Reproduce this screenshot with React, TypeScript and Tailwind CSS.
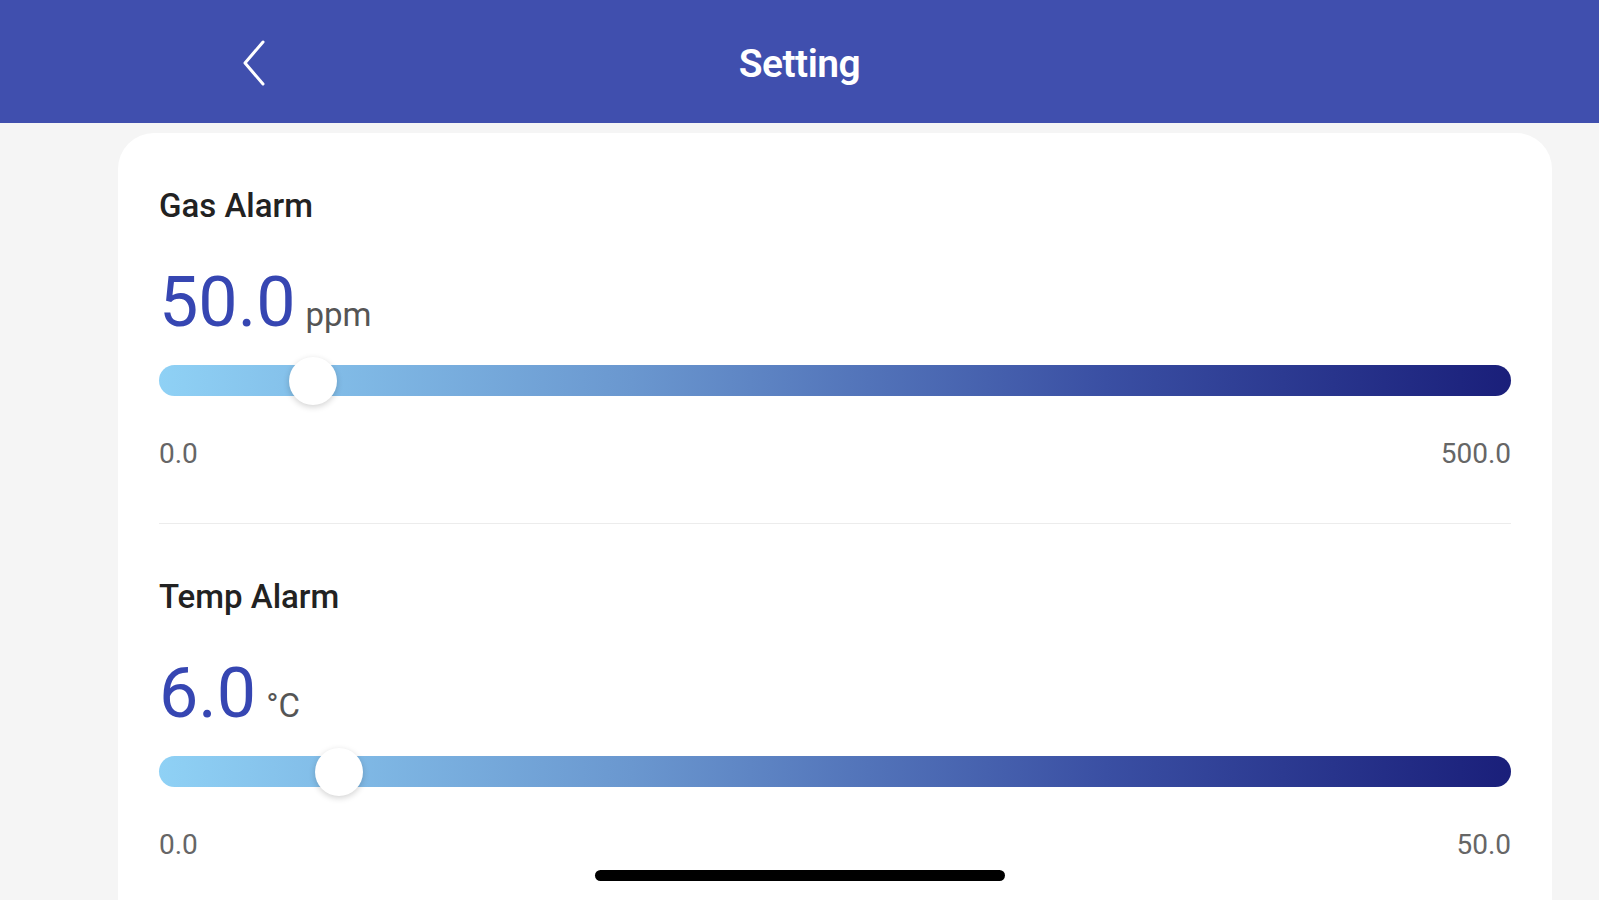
type AlarmProps = {
  title: string
  value: number
  unit: string
  min: number
  max: number
}

const TRACK_W = 1352
const THUMB = 48

const BackIcon = () => (
  <svg width="26" height="48" viewBox="0 0 26 48" fill="none">
    <polyline
      points="22,3 4,24 22,45"
      stroke="white"
      strokeWidth="3"
      strokeLinecap="round"
      strokeLinejoin="round"
    />
  </svg>
)

const AlarmSlider = ({ title, value, unit, min, max }: AlarmProps) => {
  const pct = (value - min) / (max - min)

  return (
    <div className="flex flex-col">
      <div className="text-[33px] leading-[40px] font-medium text-[#222222]">{title}</div>

      <div className="mt-[41px] flex items-baseline">
        <span className="text-[70px] leading-none font-normal text-[#3646b2]">{value.toFixed(1)}</span>
        <span className="ml-[10px] text-[33px] leading-none text-[#555555]">{unit}</span>
      </div>

      <div className="relative mt-[28px] h-[31px] rounded-full bg-[linear-gradient(90deg,#8fd1f5_0%,#6a97cf_35%,#3a4fa3_70%,#1a1f7a_100%)]">
        <div
          className="absolute top-1/2 -translate-y-1/2 h-[48px] w-[48px] rounded-full bg-white shadow-[0_2px_6px_rgba(0,0,0,0.18)]"
          style={{ left: pct * (TRACK_W - THUMB) }}
        />
      </div>

      <div className="mt-[41px] flex justify-between text-[28px] leading-[34px] text-[#666666]">
        <span>{min.toFixed(1)}</span>
        <span>{max.toFixed(1)}</span>
      </div>
    </div>
  )
}

export default function App() {
  return (
    <div
      className="relative h-[900px] w-full overflow-hidden bg-[#f5f5f5] flex flex-col"
      style={{ fontFamily: "Roboto, 'Liberation Sans', sans-serif" }}
    >
      <header className="h-[123px] shrink-0 bg-[#404fae] grid grid-cols-[1fr_auto_1fr] items-center">
        <div className="pl-[241px] pt-[2px] flex">
          <BackIcon />
        </div>
        <h1 className="pt-[5px] text-[39px] font-semibold text-white tracking-[-0.5px]">Setting</h1>
        <div />
      </header>

      <main className="flex-1 ml-[118px] mr-[47px] mt-[10px] rounded-t-[36px] bg-white px-[41px] pt-[53px]">
        <AlarmSlider title="Gas Alarm" value={50} unit="ppm" min={0} max={500} />
        <div className="mt-[52px] h-px bg-[#ececec]" />
        <div className="mt-[53px]">
          <AlarmSlider title="Temp Alarm" value={6} unit="°C" min={0} max={50} />
        </div>
      </main>

      <div className="absolute bottom-[19px] left-1/2 -translate-x-1/2 h-[11px] w-[410px] rounded-full bg-black" />
    </div>
  )
}
